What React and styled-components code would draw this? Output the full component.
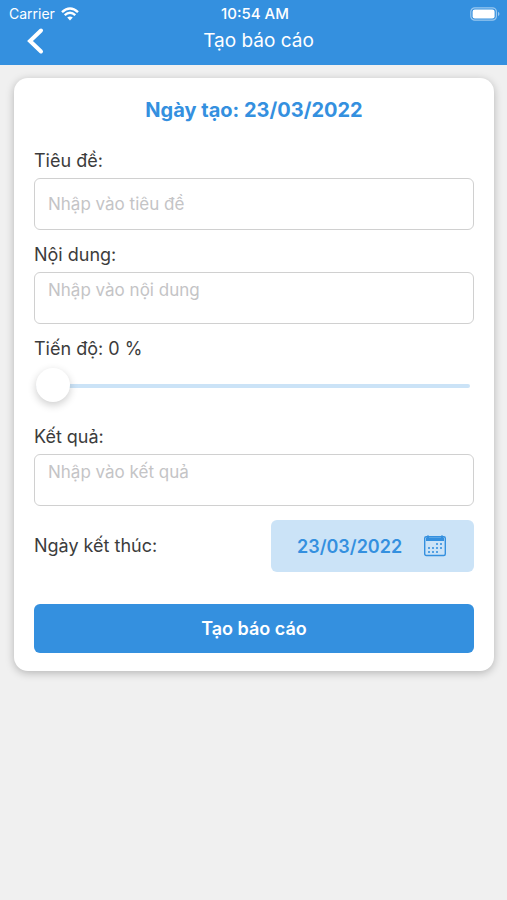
import { useState } from "react";
import styled, { createGlobalStyle } from "styled-components";

const Report = () => {
  const [title, setTitle] = useState("");
  const [content, setContent] = useState("");
  const [progress, setProgress] = useState(0);
  const [result, setResult] = useState("");
  const date = "23/03/2022";

  return (
    <>
      <GlobalStyle />
      <Header>
        <StatusBar>
          <Carrier>
            Carrier
            <WifiIcon />
          </Carrier>
          <Clock>10:54 AM</Clock>
          <BatteryIcon />
        </StatusBar>
        <NavBar>
          <BackButton type="button" aria-label="Quay lại">
            <svg width="18" height="28" viewBox="0 0 18 28" fill="none">
              <path
                d="M15 3.5 4 14 15 24.5"
                stroke="white"
                strokeWidth="4"
                strokeLinecap="round"
              />
            </svg>
          </BackButton>
          <NavTitle>Tạo báo cáo</NavTitle>
        </NavBar>
      </Header>
      <Card onSubmit={(e) => e.preventDefault()}>
        <CreatedDate>Ngày tạo: {date}</CreatedDate>
        <Field>
          <Label htmlFor="title">Tiêu đề:</Label>
          <TextInput
            id="title"
            placeholder="Nhập vào tiêu đề"
            value={title}
            onChange={(e) => setTitle(e.target.value)}
          />
        </Field>
        <Field>
          <Label htmlFor="content">Nội dung:</Label>
          <TextArea
            id="content"
            placeholder="Nhập vào nội dung"
            value={content}
            onChange={(e) => setContent(e.target.value)}
          />
        </Field>
        <Field>
          <Label htmlFor="progress">Tiến độ: {progress} %</Label>
          <Slider
            id="progress"
            type="range"
            min="0"
            max="100"
            value={progress}
            onChange={(e) => setProgress(e.target.value)}
          />
        </Field>
        <Field>
          <Label htmlFor="result">Kết quả:</Label>
          <TextArea
            id="result"
            placeholder="Nhập vào kết quả"
            value={result}
            onChange={(e) => setResult(e.target.value)}
          />
        </Field>
        <EndDateRow>
          <Label htmlFor="end-date">Ngày kết thúc:</Label>
          <DateButton id="end-date" type="button">
            {date}
            <CalendarIcon />
          </DateButton>
        </EndDateRow>
        <SubmitButton type="submit">Tạo báo cáo</SubmitButton>
      </Card>
    </>
  );
};

export default Report;

const WifiIcon = () => (
  <svg width="18" height="14" viewBox="0 0 18 14" fill="none">
    <path d="M1 5.2Q9-2.4 17 5.2" stroke="white" strokeWidth="2.4" />
    <path d="M3.7 8.2Q9 3.2 14.3 8.2" stroke="white" strokeWidth="2.3" />
    <path d="M9 13.5 6.2 10.6Q9 8.3 11.8 10.6Z" fill="white" />
  </svg>
);

const BatteryIcon = () => (
  <svg width="31" height="14" viewBox="0 0 31 14" fill="none">
    <rect
      x="0.8"
      y="0.8"
      width="25.6"
      height="12.4"
      rx="4"
      stroke="white"
      strokeOpacity="0.5"
      strokeWidth="1.2"
    />
    <rect x="2.6" y="2.6" width="22" height="8.8" rx="2.2" fill="white" />
    <path d="M28 4.8Q31 7 28 9.2Z" fill="white" fillOpacity="0.5" />
  </svg>
);

const dots = [
  [12, 8],
  [16, 8],
  [4, 12],
  [8, 12],
  [12, 12],
  [16, 12],
  [4, 16],
  [8, 16],
  [12, 16],
];

const CalendarIcon = () => (
  <svg width="22" height="22" viewBox="0 0 22 22" fill="none">
    <rect
      x="0.7"
      y="1.7"
      width="20.6"
      height="18.8"
      rx="1.5"
      stroke="#3490df"
      strokeWidth="1.4"
    />
    <path d="M2 2.5H20V6H2Z" fill="#3490df" />
    <path d="M4 0.5V3M18 0.5V3" stroke="#3490df" strokeWidth="2" />
    {dots.map(([x, y]) => (
      <rect
        key={`${x}-${y}`}
        x={x}
        y={y}
        width="2"
        height="2"
        fill="#3490df"
        fillOpacity="0.8"
      />
    ))}
  </svg>
);

const GlobalStyle = createGlobalStyle`
  * {
    box-sizing: border-box;
  }

  body {
    margin: 0;
    background: #f0f0f0;
    color: #3c3c3c;
    font-family: Inter, "Liberation Sans", sans-serif;
  }

  button,
  input,
  textarea {
    font-family: inherit;
  }
`;

const Header = styled.header`
  background: #3490df;
  color: white;
  padding-bottom: 16px;
`;

const StatusBar = styled.div`
  display: grid;
  grid-template-columns: 1fr auto 1fr;
  align-items: center;
  height: 27px;
  padding: 0 6px 0 9px;
  font-size: 14px;

  > :last-child {
    justify-self: end;
  }
`;

const Carrier = styled.span`
  display: flex;
  align-items: center;
  gap: 6px;
`;

const Clock = styled.span`
  font-size: 15px;
  font-weight: 500;
`;

const NavBar = styled.div`
  display: grid;
  grid-template-columns: 48px 1fr 48px;
  align-items: center;
  height: 22px;
  padding: 0 10px 0 20px;
`;

const BackButton = styled.button`
  display: flex;
  padding: 0 6px;
  border: none;
  background: none;
  cursor: pointer;
`;

const NavTitle = styled.h1`
  margin: 0;
  font-size: 19px;
  font-weight: 400;
  line-height: 22px;
  text-align: center;
`;

const Card = styled.form`
  margin: 13px 13px 13px 14px;
  padding: 20px 20px 18px;
  border-radius: 14px;
  background: white;
  box-shadow: 0 2px 8px rgba(0, 0, 0, 0.25);
`;

const CreatedDate = styled.h2`
  margin: 0 0 27px;
  color: #3490df;
  font-size: 20px;
  font-weight: 700;
  line-height: 24px;
  text-align: center;
`;

const Field = styled.div`
  display: flex;
  flex-direction: column;
  gap: 5px;
  margin-bottom: 13px;
`;

const Label = styled.label`
  font-size: 18px;
  line-height: 24px;
`;

const TextInput = styled.input`
  width: 100%;
  height: 52px;
  padding: 0 13px;
  border: 1px solid #d0d0d0;
  border-radius: 6px;
  background: white;
  color: #3c3c3c;
  font-size: 17px;

  &::placeholder {
    color: #c4c4c6;
  }
`;

const TextArea = styled.textarea`
  width: 100%;
  height: 52px;
  padding: 6px 13px;
  border: 1px solid #d0d0d0;
  border-radius: 6px;
  background: white;
  color: #3c3c3c;
  font-size: 17px;
  line-height: 22px;
  resize: none;

  &::placeholder {
    color: #c4c4c6;
  }
`;

const Slider = styled.input`
  appearance: none;
  height: 40px;
  margin: 0 4px 6px 2px;
  background: none;

  &::-webkit-slider-runnable-track {
    height: 4px;
    border-radius: 2px;
    background: #cbe3f7;
  }

  &::-webkit-slider-thumb {
    appearance: none;
    width: 34px;
    height: 34px;
    margin-top: -16px;
    border-radius: 50%;
    background: white;
    box-shadow: 0 3px 8px rgba(0, 0, 0, 0.2);
  }
`;

const EndDateRow = styled.div`
  display: flex;
  align-items: center;
  justify-content: space-between;
  margin: 14px 0 32px;
`;

const DateButton = styled.button`
  display: flex;
  align-items: center;
  justify-content: space-between;
  width: 203px;
  height: 52px;
  padding: 0 28px 0 26px;
  border: none;
  border-radius: 6px;
  background: #cbe3f7;
  color: #3490df;
  font-size: 18px;
  font-weight: 600;
  cursor: pointer;
`;

const SubmitButton = styled.button`
  display: block;
  width: 100%;
  height: 49px;
  border: none;
  border-radius: 6px;
  background: #3490df;
  color: white;
  font-size: 18px;
  font-weight: 600;
  cursor: pointer;
`;
